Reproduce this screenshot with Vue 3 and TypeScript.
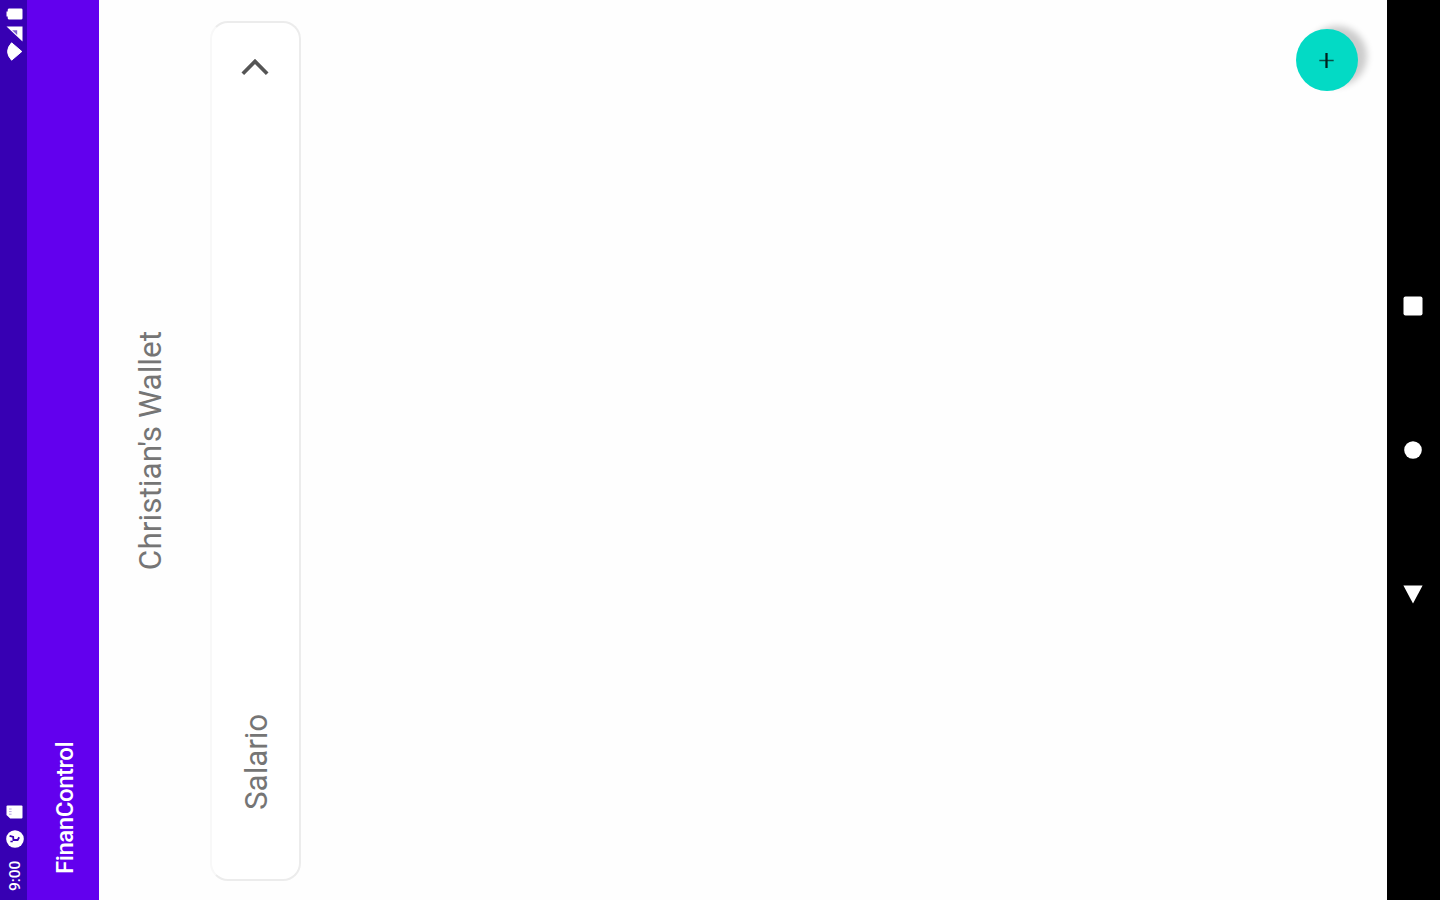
<script setup lang="ts">
const appName = 'FinanControl'
const walletTitle = "Christian's Wallet"
const wallets: string[] = ['Salario']
</script>

<template>
  <div class="stage">
    <div class="device">
      <header class="status">
        <span class="clock">9:00</span>
        <svg class="face" viewBox="0 0 18 18">
          <circle cx="9" cy="9" r="8.8" fill="#fff" />
          <path d="M12.2 3.6L11 7.2L8 7.4V11.6L10.8 13.2" fill="none" stroke="#3700b3" stroke-width="1.8" />
          <path d="M6.6 4.4v2.4" stroke="#3700b3" stroke-width="1.5" />
        </svg>
        <svg class="sd" viewBox="0 0 14 17">
          <path d="M4 .5H12.6Q13.6.5 13.6 1.5V15.5Q13.6 16.5 12.6 16.5H1.4Q.4 16.5 .4 15.5V4.2z" fill="#fff" />
          <path d="M4.8 3v2.6M7.4 3v2.6M10 3v2.6" stroke="#b9a6e4" stroke-width="1" />
        </svg>
        <span class="spring"></span>
        <svg class="wifi" viewBox="0 0 19 16">
          <path d="M.8 4.6Q9.5-3.4 18.2 4.6L9.5 14.8z" fill="#fff" stroke="#fff" stroke-width="1" stroke-linejoin="round" />
        </svg>
        <svg class="signal" viewBox="0 0 16 17">
          <path d="M15.5 .5V16.5H.5z" fill="#fff" />
          <path d="M11.8 6.2v5H7z" fill="#7d62ce" />
        </svg>
        <svg class="battery" viewBox="0 0 12 17">
          <path d="M3.5.5h5v1.2h1.7Q11.5 1.9 11.5 3.2V15.2Q11.5 16.5 10.2 16.5H1.8Q.5 16.5 .5 15.2V3.2Q.5 1.9 1.8 1.7H3.5z" fill="#fff" />
        </svg>
      </header>

      <div class="appbar"><span class="name">{{ appName }}</span></div>

      <main class="content">
        <h1 class="title"><span>{{ walletTitle }}</span></h1>
        <section v-for="wallet in wallets" :key="wallet" class="card">
          <span class="label">{{ wallet }}</span>
          <svg class="chevron" viewBox="0 0 20 30">
            <path d="M2.2 2.8L14.6 15L2.2 27.2" fill="none" stroke="#555" stroke-width="3.7" />
          </svg>
        </section>
        <button class="fab" type="button" aria-label="Add">
          <svg viewBox="0 0 18 18">
            <path d="M9 1.4V16.6" stroke="#064f48" stroke-width="1.6" />
            <path d="M1 9H17" stroke="#00201d" stroke-width="2.4" />
          </svg>
        </button>
      </main>

      <nav class="navbar">
        <svg viewBox="0 0 20 20"><path d="M.4 10L18.4 .4V19.6z" fill="#fff" /></svg>
        <svg viewBox="0 0 20 20"><circle cx="10" cy="10" r="8.8" fill="#fff" /></svg>
        <svg viewBox="0 0 20 20"><rect x=".5" y=".5" width="19" height="19" rx="2" fill="#fff" /></svg>
      </nav>
    </div>
  </div>
</template>

<style>
html,
body {
  overflow: hidden;
}
</style>

<style scoped>
.stage {
  width: 1440px;
  height: 900px;
  overflow: hidden;
  background: #fff;
}

/* The portrait screen is turned a quarter counter-clockwise */
.device {
  width: 900px;
  height: 1440px;
  display: flex;
  flex-direction: column;
  transform-origin: 0 0;
  transform: translateY(900px) rotate(-90deg);
  font-family: Roboto, "Liberation Sans", sans-serif;
  background: #fefefe;
}

svg {
  display: block;
  flex: none;
}

.status {
  box-sizing: border-box;
  height: 27px;
  flex: none;
  display: flex;
  align-items: center;
  padding: 2px 8px 0 9px;
  background: #3700b3;
  color: #fff;
}

.clock {
  width: 43px;
  font-size: 15.5px;
  font-weight: 500;
  line-height: 24px;
  letter-spacing: -0.1px;
}

.face {
  width: 18px;
  height: 18px;
}

.sd {
  width: 14px;
  height: 17px;
  margin-left: 11px;
}

.spring {
  flex: 1;
}

.wifi {
  width: 19px;
  height: 16px;
}

.signal {
  width: 16px;
  height: 17px;
  margin-right: 6px;
}

.battery {
  width: 12px;
  height: 17px;
}

.appbar {
  box-sizing: border-box;
  height: 72px;
  flex: none;
  display: flex;
  align-items: center;
  padding: 4px 0 0 26px;
  background: #6200ee;
  color: #fff;
}

.name {
  font-size: 24px;
  font-weight: 500;
  line-height: 30px;
  letter-spacing: -0.45px;
}

.content {
  flex: 1;
  display: flex;
  flex-direction: column;
}

.title {
  margin: 32px 1px 0 0;
  height: 40px;
  line-height: 40px;
  font-size: 31.5px;
  font-weight: 400;
  letter-spacing: 0.04px;
  text-align: center;
  color: #757575;
}

.card {
  box-sizing: border-box;
  height: 91px;
  margin: 39px 21px 0 19px;
  padding: 0 36px 0 69px;
  display: flex;
  align-items: center;
  justify-content: space-between;
  border: 2px solid #ececec;
  border-top-color: #f8f8f8;
  border-radius: 18px;
  background: #fff;
}

.label {
  padding-top: 2px;
  font-size: 31.5px;
  line-height: 40px;
  font-weight: 400;
  letter-spacing: -0.1px;
  color: #757575;
}

.chevron {
  width: 20px;
  height: 30px;
  margin: 0 -3px 2px 0;
}

.fab {
  width: 62px;
  height: 62px;
  margin: auto 29px 29px auto;
  padding: 0;
  border: 0;
  border-radius: 50%;
  display: flex;
  align-items: center;
  justify-content: center;
  background: #03dac5;
  box-shadow: 4px 10px 7px -1px rgba(0, 0, 0, 0.2);
}

.fab svg {
  width: 17px;
  height: 17px;
  margin: 0 2px 1px 0;
}

.navbar {
  box-sizing: border-box;
  height: 53px;
  flex: none;
  display: flex;
  align-items: center;
  justify-content: center;
  gap: 124px;
  padding: 0 1px 1px 0;
  background: #000;
}

.navbar svg {
  width: 20px;
  height: 20px;
}
</style>
